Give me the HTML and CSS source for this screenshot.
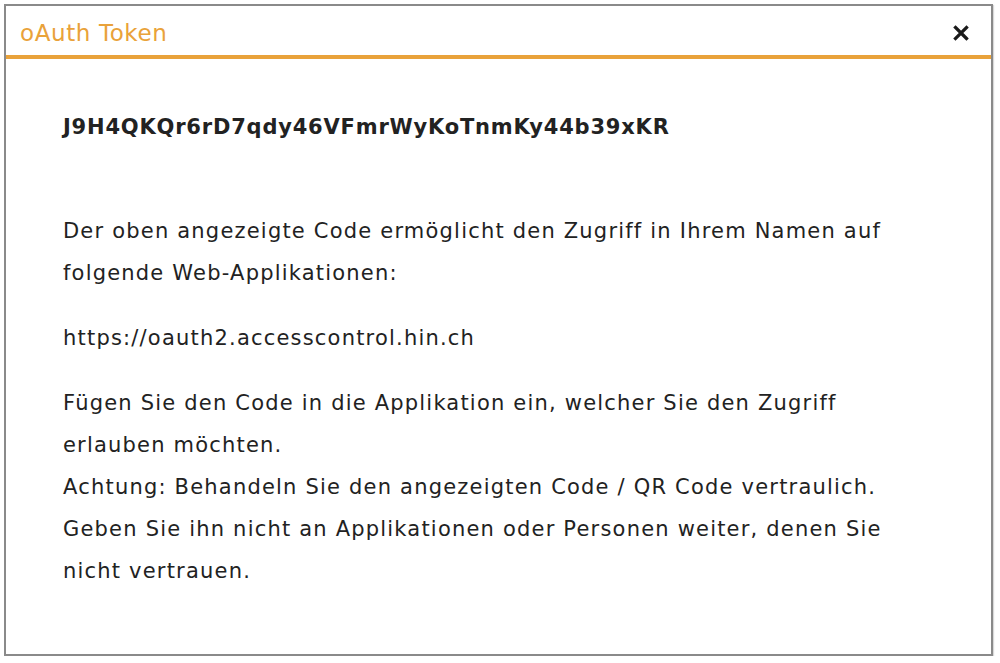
FILE: index.html
```html
<!DOCTYPE html>
<html lang="de">
<head>
<meta charset="utf-8">
<title>oAuth Token</title>
<link rel="stylesheet" href="styles.css">
</head>
<body>
<div class="dialog">
  <div class="header">
    <span class="title">oAuth Token</span>
    <button class="close" aria-label="Schliessen">
      <svg width="16" height="16" viewBox="0 0 16 16"><path d="M2.5 2.5 L13.5 13.5 M13.5 2.5 L2.5 13.5" stroke="#1a1a1a" stroke-width="3.2" stroke-linecap="square"/></svg>
    </button>
  </div>
  <div class="content">
    <p class="token">J9H4QKQr6rD7qdy46VFmrWyKoTnmKy44b39xKR</p>
    <p class="para first">Der oben angezeigte Code ermöglicht den Zugriff in Ihrem Namen auf folgende Web-Applikationen:</p>
    <p class="para">https://oauth2.accesscontrol.hin.ch</p>
    <p class="para">Fügen Sie den Code in die Applikation ein, welcher Sie den Zugriff erlauben möchten.<br>Achtung: Behandeln Sie den angezeigten Code / QR Code vertraulich. Geben Sie ihn nicht an Applikationen oder Personen weiter, denen Sie nicht vertrauen.</p>
  </div>
</div>
</body>
</html>
```
FILE: styles.css
```css
html, body {
  margin: 0;
  padding: 0;
  background: #ffffff;
}
body {
  font-family: "DejaVu Sans", Verdana, sans-serif;
  color: #222222;
}
.dialog {
  box-sizing: border-box;
  margin: 4px 0 0 4px;
  width: 989px;
  height: 652px;
  border: 2px solid #8a8a8a;
  box-shadow: 1px 1px 1px rgba(0,0,0,0.15);
  background: #ffffff;
}
.header {
  box-sizing: border-box;
  height: 53px;
  border-bottom: 4px solid #e9a23a;
  display: flex;
  align-items: center;
  justify-content: space-between;
  padding: 4px 22px 0 14px;
}
.title {
  color: #e9a23a;
  font-size: 23px;
  letter-spacing: 0.6px;
}
.close {
  background: none;
  border: 0;
  padding: 0;
  width: 16px;
  height: 16px;
  display: flex;
  cursor: pointer;
}
.content {
  padding: 47px 91px 0 57px;
}
.token {
  margin: 0;
  font-weight: bold;
  font-size: 21px;
  line-height: 42px;
  letter-spacing: 0.8px;
}
.para {
  margin: 23px 0 0 0;
  font-size: 21px;
  line-height: 42px;
  letter-spacing: 1.2px;
}
.para.first {
  margin-top: 62px;
}
```
